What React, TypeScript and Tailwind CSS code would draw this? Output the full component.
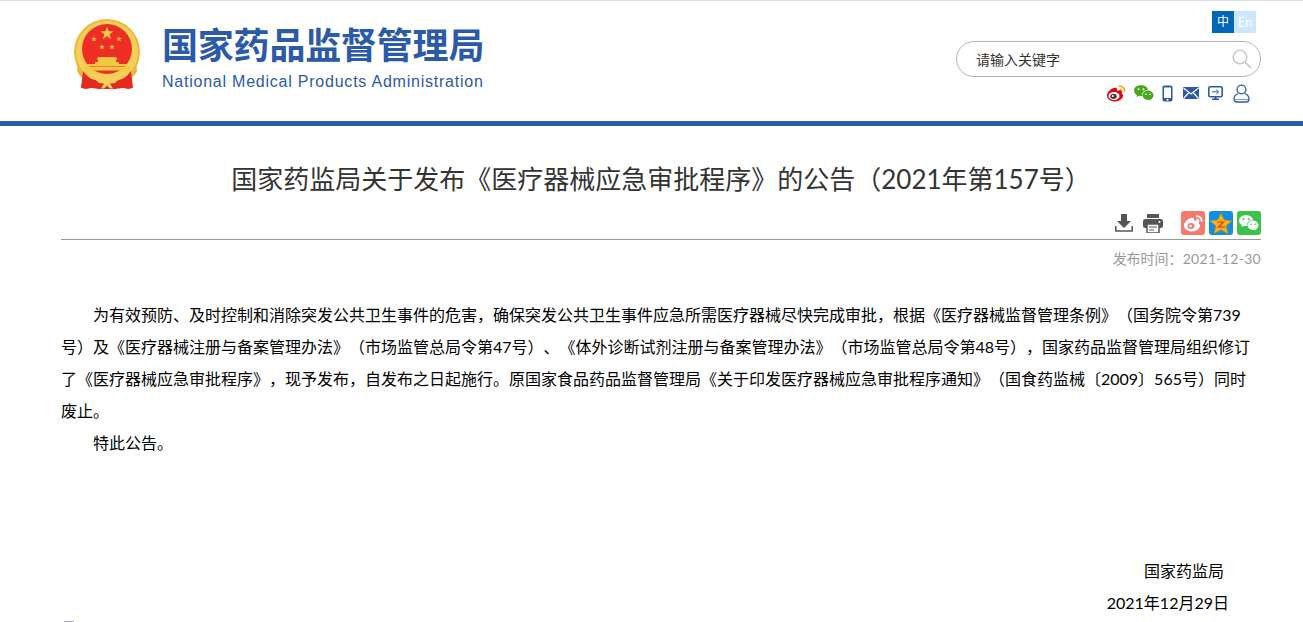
import React from "react";

const F = '"Lato","Noto Sans CJK SC",sans-serif';
const LATIN = '"Liberation Sans","Noto Sans CJK SC",sans-serif';

function Emblem() {
  const star = (cx: number, cy: number, r: number, key: number) => {
    const pts: string[] = [];
    for (let i = 0; i < 10; i++) {
      const a = (-90 + i * 36) * (Math.PI / 180);
      const rr = i % 2 === 0 ? r : r * 0.4;
      pts.push(`${cx + rr * Math.cos(a)},${cy + rr * Math.sin(a)}`);
    }
    return <polygon key={key} points={pts.join(" ")} fill="#f3c744" />;
  };
  return (
    <svg width="68" height="72" viewBox="0 0 68 72" className="block">
      <circle cx="33" cy="33" r="33" fill="#efb73a" />
      <circle cx="33" cy="33" r="31" fill="#f6cf5a" />
      <circle cx="33" cy="30" r="25" fill="#ee2d24" />
      {star(33, 14.500, 7, 1)}
      {star(20, 20, 3, 2)}
      {star(45, 20, 3, 3)}
      {star(28, 28, 3, 4)}
      {star(38, 28, 3, 5)}
      <path d="M24 38h18l1.500 2.500H42V43h3v2H21v-2h3v-2.500h-1.500z" fill="#f3c744" />
      <path d="M12 45h42v2H12zM9 47.500h48l-3 4H12z" fill="#f3c744" />
      <path d="M4 44c4 12 14 19 29 19s25-7 29-19l1 8c-4 9-16 16-30 16S7 61 3 52z" fill="#efb73a" />
      <path d="M9 52c4 6 9 9 16 10l1 8-9-1-5 1-5-1z" fill="#e4291f" />
      <path d="M57 52c-4 6-9 9-16 10l-1 8 9-1 5 1 5-1z" fill="#e4291f" />
      <path d="M24 62h18v8H24z" fill="#e4291f" />
      <path d="M33 58l3 3 5-1 3 1-3 3-5 .5 3 5h-3l-3-3-3 3h-3l3-5-5-.5-3-3 3-1 5 1z" fill="#f6cf5a" />
    </svg>
  );
}

function Weibo() {
  return (
    <svg width="20" height="17" viewBox="0 0 20 17" className="block">
      <path d="M1 10.500C1 7 6 2.800 9 2.800c2 0 2.500 1.500 2 3 3-1 5-.5 5 1.200 0 .6 0 1-.5 1.500 1 .5 1.500 1.200 1.500 2.300 0 2.500-3.500 5.700-8 5.700S1 14 1 10.500z" fill="#e60012" />
      <ellipse cx="8" cy="11" rx="5.500" ry="4" fill="#fff" />
      <ellipse cx="7.500" cy="11.300" rx="3.200" ry="2.600" fill="#3a3a3a" />
      <circle cx="6.800" cy="11" r="1" fill="#fff" />
      <path d="M13 1.200c3-.7 6.200 2 5.500 5.500" fill="none" stroke="#f2a81d" strokeWidth="1.700" />
      <path d="M13.500 4.200c1.500-.3 2.600 1 2.300 2.300" fill="none" stroke="#f2a81d" strokeWidth="1.300" />
    </svg>
  );
}

function Wechat({ big = "#49a81e", small = "#49a81e", eye = "#fff" }: { big?: string; small?: string; eye?: string }) {
  return (
    <svg width="20" height="16" viewBox="0 0 20 16" className="block">
      <ellipse cx="7" cy="5.500" rx="7" ry="5.500" fill={big} />
      <path d="M3 9l-.5 3 3-1.500z" fill={big} />
      <circle cx="4.500" cy="4.200" r="1" fill={eye} />
      <circle cx="9.500" cy="4.200" r="1" fill={eye} />
      <ellipse cx="14" cy="10" rx="6" ry="5" fill={eye} />
      <ellipse cx="14" cy="10.300" rx="5.500" ry="4.700" fill={small} />
      <path d="M16.500 13.500l1 2-3-1z" fill={small} />
      <circle cx="12" cy="9.300" r=".8" fill={eye} />
      <circle cx="16" cy="9.300" r=".8" fill={eye} />
    </svg>
  );
}

function TopIcons() {
  const blue = "#2b5aa8";
  return (
    <div className="flex items-center h-[20px]">
      <Weibo />
      <div className="ml-[8px]"><Wechat /></div>
      <svg width="11" height="17" viewBox="0 0 11 17" className="block ml-[8px]">
        <rect x="0.500" y="0.500" width="10" height="16" rx="1.800" fill={blue} />
        <rect x="2" y="2.500" width="7" height="10.500" fill="#fff" />
        <circle cx="5.500" cy="14.800" r="1" fill="#fff" />
      </svg>
      <svg width="16" height="12" viewBox="0 0 16 12" className="block ml-[10px]">
        <rect width="16" height="12" rx="1" fill={blue} />
        <path d="M0.500 1l7.500 6 7.500-6M0.500 11.500L5.500 6M15.500 11.500L10.500 6" fill="none" stroke="#fff" strokeWidth="1.200" />
      </svg>
      <svg width="15" height="15" viewBox="0 0 15 15" className="block ml-[9px]">
        <rect x="0.800" y="0.800" width="13.400" height="10" rx="1.500" fill="none" stroke={blue} strokeWidth="1.600" />
        <path d="M4 5.800h6.500M8.300 3.600l2.300 2.200-2.300 2.200" fill="none" stroke={blue} strokeWidth="1" />
        <path d="M6.500 11h2v1.500h2.500V14H4v-1.500h2.500z" fill={blue} />
      </svg>
      <svg width="17" height="19" viewBox="0 0 17 19" className="block ml-[10px]">
        <circle cx="8.500" cy="5.500" r="4.400" fill="none" stroke={blue} strokeWidth="1.300" />
        <path d="M5.500 9.500C2.500 10.500 1 12.500 1 15c0 2 1 3 3 3h9c2 0 3-1 3-3 0-2.500-1.500-4.500-4.500-5.500" fill="none" stroke={blue} strokeWidth="1.300" />
        <path d="M1.500 15.500h14" stroke={blue} strokeWidth="0.600" />
      </svg>
    </div>
  );
}

function ShareIcons() {
  return (
    <div className="flex items-center h-[24px]">
      <svg width="18" height="18" viewBox="0 0 18 18" className="block">
        <path d="M6 0h6v7h4l-7 7-7-7h4z" fill="#555" />
        <path d="M.8 12v5h16.400v-5" fill="none" stroke="#555" strokeWidth="1.500" />
      </svg>
      <svg width="20" height="19" viewBox="0 0 20 19" className="block ml-[10px]">
        <path d="M4 0h12v4H4z" fill="#555" />
        <rect y="5" width="20" height="9" rx="2.500" fill="#555" />
        <circle cx="16.500" cy="8" r="1" fill="#fff" />
        <rect x="4" y="10" width="12" height="9" fill="#fff" stroke="#555" strokeWidth="1.500" />
        <path d="M6 13h8M6 16h5" stroke="#555" strokeWidth="1.200" />
      </svg>
      <div className="ml-[18px] w-[24px] h-[24px] rounded-[3px] bg-[#f5796d] flex items-center justify-center">
        <svg width="20" height="17" viewBox="0 0 20 17" className="block">
          <path d="M1 10.500C1 7 6 2.800 9 2.800c2 0 2.500 1.500 2 3 3-1 5-.5 5 1.200 0 .6 0 1-.5 1.500 1 .5 1.500 1.200 1.500 2.300 0 2.500-3.500 5.700-8 5.700S1 14 1 10.500z" fill="#fff" />
          <ellipse cx="8" cy="11" rx="3.500" ry="3" fill="#f5796d" />
          <circle cx="7.500" cy="11" r="1.300" fill="#fff" />
          <path d="M13 1.200c3-.7 6.200 2 5.500 5.500" fill="none" stroke="#fff" strokeWidth="1.700" />
          <path d="M13.500 4.200c1.500-.3 2.600 1 2.300 2.300" fill="none" stroke="#fff" strokeWidth="1.300" />
        </svg>
      </div>
      <div className="ml-[4px] w-[24px] h-[24px] rounded-[3px] bg-[#0d8fe6] flex items-center justify-center">
        <svg width="24" height="23" viewBox="0 0 24 23" className="block">
          <polygon points="12,1 15.300,8 23,8.800 17.200,14 19,21.800 12,17.800 5,21.800 6.800,14 1,8.800 8.700,8" fill="#f7b316" stroke="#b9860f" strokeWidth="0.600" />
          <path d="M8.500 9.500h7.500l-4.500 4.800h4.500v1.500H7.500l5-5h-4z" fill="#d9541e" />
        </svg>
      </div>
      <div className="ml-[4px] w-[24px] h-[24px] rounded-[3px] bg-[#3bc24a] flex items-center justify-center">
        <Wechat big="#fff" small="#fff" eye="#3bc24a" />
      </div>
    </div>
  );
}

export default function App() {
  return (
    <div className="h-[622px] overflow-hidden bg-white text-[#000] [text-spacing-trim:space-all]" style={{ fontFamily: F }}>
      <header className="border-t border-[#dddddd]">
        <div className="ml-[61px] w-[1200px] h-[120px] flex justify-between">
          <div className="flex">
            <div className="ml-[13px] mt-[18px]"><Emblem /></div>
            <div className="ml-[20px] mt-[24px] text-[#2b5aa8]" style={{ fontFamily: LATIN }}>
              <div className="text-[36px] leading-[44px] font-bold tracking-[-0.2px] whitespace-nowrap">国家药品监督管理局</div>
              <div className="text-[16px] leading-[20px] mt-[3px] tracking-[0.77px] whitespace-nowrap">National Medical Products Administration</div>
            </div>
          </div>
          <div className="w-[305px] flex flex-col items-stretch">
            <div className="flex justify-end mt-[10px] pr-[5px]">
              <span className="w-[22px] h-[22px] bg-[#0068b7] text-white text-[12px] leading-[22px] text-center">中</span>
              <span className="w-[22px] h-[22px] bg-[#cce6ff] text-white text-[13px] leading-[22px] text-center">En</span>
            </div>
            <div className="mt-[8px] h-[36px] rounded-[18px] border border-[#b5b5b5] flex items-center justify-between pl-[19px] pr-[8px]">
              <span className="text-[14px] text-[#333]">请输入关键字</span>
              <svg width="20" height="20" viewBox="0 0 20 20" className="block">
                <circle cx="8" cy="8" r="6.800" fill="none" stroke="#c4c4c4" strokeWidth="1.300" />
                <path d="M13 13l6 6" stroke="#c4c4c4" strokeWidth="1.700" />
              </svg>
            </div>
            <div className="flex justify-end mt-[6px] pr-[11px]"><TopIcons /></div>
          </div>
        </div>
      </header>
      <div className="h-[5px] bg-[#2b5aa8]" />
      <main className="ml-[61px] w-[1200px]">
        <h1 className="mt-[33px] text-[26px] leading-[40px] text-[#333] text-center font-normal">国家药监局关于发布《医疗器械应急审批程序》的公告（2021年第157号）</h1>
        <div className="mt-[12px] flex justify-end"><ShareIcons /></div>
        <div className="mt-[4px] h-px bg-[#999999]" />
        <div className="mt-[9px] text-[14px] leading-[20px] text-[#999999] text-right">发布时间：<span className="tracking-[0.3px]">2021-12-30</span></div>
        <article className="mt-[30px] text-[16px] leading-[32px]">
          <p className="indent-[32px] whitespace-nowrap">
            为有效预防、及时控制和消除突发公共卫生事件的危害，确保突发公共卫生事件应急所需医疗器械尽快完成审批，根据《医疗器械监督管理条例》（国务院令第739<br />
            号）及《医疗器械注册与备案管理办法》（市场监管总局令第47号）、《体外诊断试剂注册与备案管理办法》（市场监管总局令第48号），国家药品监督管理局组织修订<br />
            了《医疗器械应急审批程序》，现予发布，自发布之日起施行。原国家食品药品监督管理局《关于印发医疗器械应急审批程序通知》（国食药监械〔2009〕565号）同时<br />
            废止。
          </p>
          <p className="indent-[32px]">特此公告。</p>
          <div className="h-[96px]" />
          <p className="text-right pr-[37px]">国家药监局</p>
          <p className="text-right pr-[32px]">2021年12月29日</p>
        </article>
        <div className="mt-[2px] ml-[3px] w-[10px] h-px bg-[#a0a8d0]" />
      </main>
    </div>
  );
}
